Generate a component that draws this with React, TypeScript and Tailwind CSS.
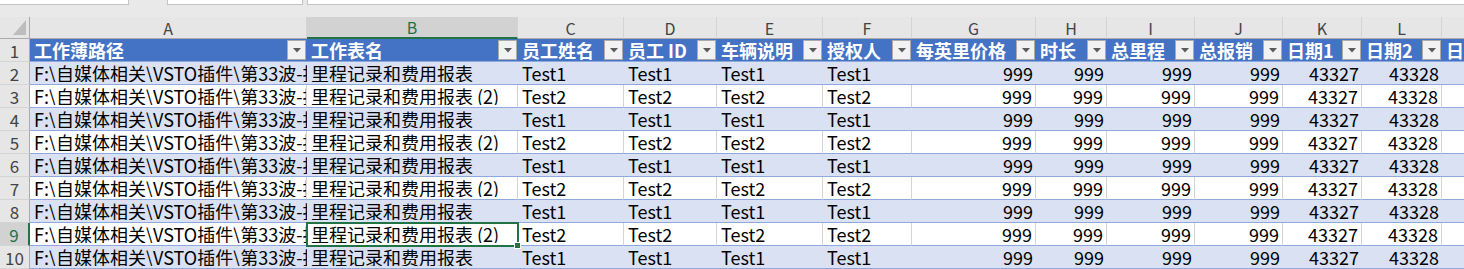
const font = "font-['Noto_Sans_CJK_SC',sans-serif]";

type Col = { key: string; w: string; right: boolean; head: string };

const cols: Col[] = [
  { key: "A", w: "w-[277px]", right: false, head: "工作薄路径" },
  { key: "B", w: "w-[211px]", right: false, head: "工作表名" },
  { key: "C", w: "w-[106px]", right: false, head: "员工姓名" },
  { key: "D", w: "w-[93px]", right: false, head: "员工 ID" },
  { key: "E", w: "w-[106px]", right: false, head: "车辆说明" },
  { key: "F", w: "w-[89px]", right: false, head: "授权人" },
  { key: "G", w: "w-[124px]", right: true, head: "每英里价格" },
  { key: "H", w: "w-[71px]", right: true, head: "时长" },
  { key: "I", w: "w-[88px]", right: true, head: "总里程" },
  { key: "J", w: "w-[88px]", right: true, head: "总报销" },
  { key: "K", w: "w-[79px]", right: true, head: "日期1" },
  { key: "L", w: "w-[80px]", right: true, head: "日期2" },
  { key: "M", w: "w-[90px]", right: false, head: "日期3" },
];

const rowValues = (n: number): string[] => {
  const t = n % 2 === 0 ? "Test1" : "Test2";
  return [
    "F:\\自媒体相关\\VSTO插件\\第33波-批量合并工作簿",
    n % 2 === 0 ? "里程记录和费用报表" : "里程记录和费用报表 (2)",
    t,
    t,
    t,
    t,
    "999",
    "999",
    "999",
    "999",
    "43327",
    "43328",
    "",
  ];
};

const FilterButton = () => (
  <div className="shrink-0 w-[19px] h-[20px] mr-[1px] bg-[#F2F2F2] border border-[#ABABAB] flex items-center justify-center">
    <svg width="8" height="5" viewBox="0 0 8 5">
      <path d="M0 0 L8 0 L4 4.5 Z" fill="#5A5A5A" />
    </svg>
  </div>
);

const RowHeader = ({ n, selected }: { n: number; selected?: boolean }) => (
  <div
    className={`shrink-0 w-[30px] h-full flex items-center justify-center text-[17px] border-b border-[#D4D4D4] ${
      selected
        ? "bg-[#D2D2D2] text-[#217346] border-r-2 border-r-[#217346]"
        : "bg-[#E6E6E6] text-[#444] border-r border-r-[#ABABAB]"
    }`}
  >
    {n}
  </div>
);

export default function App() {
  const dataRows = [2, 3, 4, 5, 6, 7, 8, 9, 10];
  return (
    <div className={`w-[1464px] h-[269px] overflow-hidden bg-white text-[18px] leading-none ${font}`}>
      {/* formula bar strip */}
      <div className="flex h-[17px] bg-[#E9E9E9] items-start">
        <div className="w-[129px] h-[5px] bg-white border-b border-r border-[#C3C3C3]" />
        <div className="w-[38px]" />
        <div className="w-[136px] h-[5px] bg-white border-b border-l border-r border-[#C3C3C3]" />
        <div className="w-[4px]" />
        <div className="flex-1 h-[5px] bg-white border-b border-l border-[#C3C3C3]" />
      </div>

      {/* column letters */}
      <div className="flex h-[22px] bg-[#E6E6E6] text-[16px] text-[#444]">
        <div className="relative shrink-0 w-[30px] h-full border-r border-b border-[#ABABAB]">
          <svg className="absolute right-[3px] bottom-[3px]" width="13" height="15" viewBox="0 0 13 15">
            <path d="M13 0 L13 15 L0 15 Z" fill="#BDBDBD" />
          </svg>
        </div>
        {cols.map((c) => (
          <div
            key={c.key}
            className={`shrink-0 ${c.w} h-full flex items-center justify-center overflow-hidden border-r border-[#D4D4D4] ${
              c.key === "B"
                ? "bg-[#D2D2D2] text-[#217346] border-b-2 border-b-[#217346]"
                : "border-b border-b-[#ABABAB]"
            }`}
          >
            {c.key}
          </div>
        ))}
      </div>

      {/* table header row */}
      <div className="flex h-[23px]">
        <RowHeader n={1} />
        {cols.map((c) => (
          <div
            key={c.key}
            className={`shrink-0 ${c.w} h-full flex items-center justify-between overflow-hidden bg-[#4472C4] text-white font-bold border-b border-[#8EA9DB]`}
          >
            <span className="pl-[4px] whitespace-nowrap">{c.head}</span>
            <FilterButton />
          </div>
        ))}
      </div>

      {/* data rows */}
      {dataRows.map((n) => {
        const band = n % 2 === 0;
        const vals = rowValues(n);
        return (
          <div key={n} className="flex h-[23px] text-black">
            <RowHeader n={n} selected={n === 9} />
            {cols.map((c, i) => (
              <div
                key={c.key}
                className={`relative shrink-0 ${c.w} h-full flex items-center border-b border-b-[#8EA9DB] ${
                  band ? "bg-[#D9E1F2]" : "bg-white border-r border-r-[#D4D4D4]"
                } ${c.right ? "justify-end pr-[3px]" : "justify-start pl-[4px]"}`}
              >
                <span className="block w-full overflow-hidden whitespace-nowrap" style={{ textAlign: c.right ? "right" : "left" }}>
                  {vals[i]}
                </span>
                {n === 9 && c.key === "B" && (
                  <div className="absolute z-10 -left-[1px] -top-[1px] w-[213px] h-[25px] border-2 border-[#217346]">
                    <div className="absolute -right-[4px] -bottom-[4px] w-[7px] h-[7px] bg-[#217346] border border-white" />
                  </div>
                )}
              </div>
            ))}
          </div>
        );
      })}
    </div>
  );
}
